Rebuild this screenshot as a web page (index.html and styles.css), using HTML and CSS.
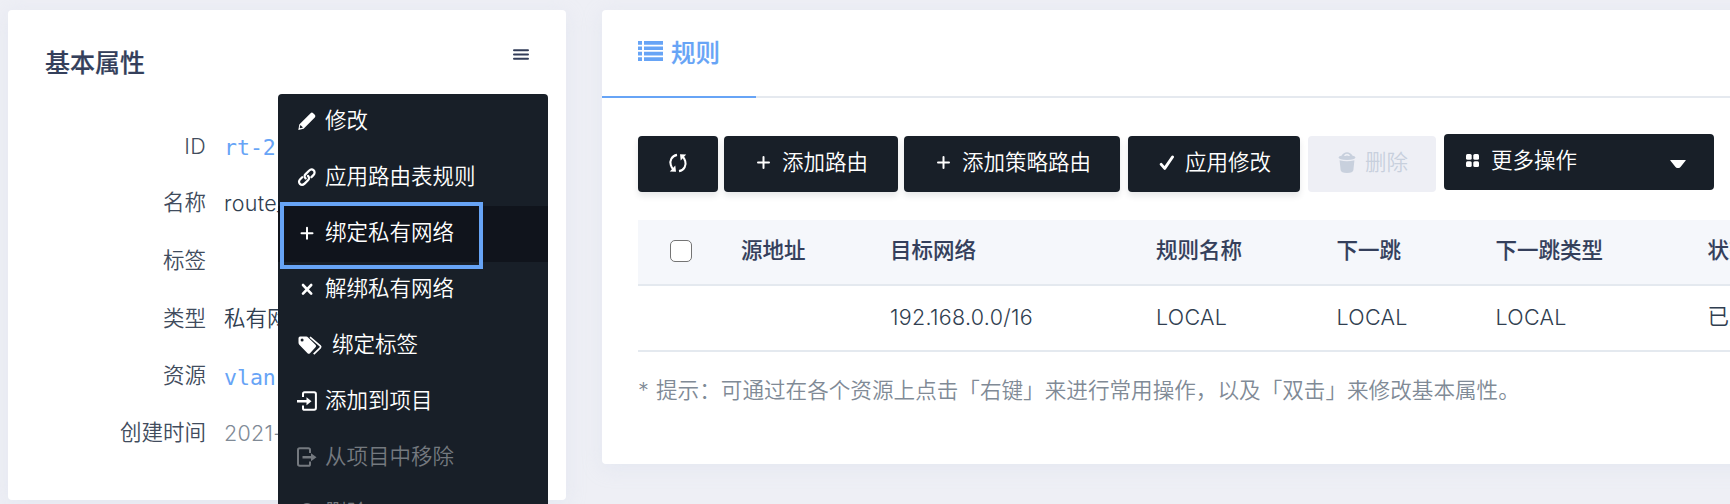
FILE: index.html
```html
<!DOCTYPE html>
<html lang="zh-CN">
<head>
<meta charset="utf-8">
<title>路由表</title>
<link rel="stylesheet" href="styles.css">
</head>
<body>
<main class="page">
  <section class="card props">
    <header class="props-head">
      <h2 class="props-title">基本属性</h2>
      <svg class="burger" width="16" height="12" viewBox="0 0 16 12"><path d="M1 1.2h14M1 5.4h14M1 9.8h14" stroke="#323c58" stroke-width="2" stroke-linecap="round"/></svg>
    </header>
    <dl class="attrs">
      <div class="attr"><dt class="latin">ID</dt><dd class="mono">rt-2</dd></div>
      <div class="attr name"><dt>名称</dt><dd class="latin">route_</dd></div>
      <div class="attr"><dt>标签</dt><dd></dd></div>
      <div class="attr"><dt>类型</dt><dd>私有网络</dd></div>
      <div class="attr"><dt>资源</dt><dd class="mono">vlan</dd></div>
      <div class="attr last"><dt>创建时间</dt><dd class="latin muted">2021-</dd></div>
    </dl>
    <ul class="menu">
      <li class="item"><svg class="icon" viewBox="0 0 20 20"><path d="M1.3 19l1-5.600L13.600 2.200q1.300-1.300 2.600 0l1.600 1.600q1.300 1.300 0 2.600L6.600 17.800z" fill="#fff"/><path d="M3.400 14l2.600 2.600-2.600.7-.7-.7z" fill="#181f28"/></svg><span>修改</span></li>
      <li class="item"><svg class="icon" viewBox="0 0 20 20" fill="none" stroke="#fff" stroke-width="2.200" stroke-linecap="round"><path d="M8.600 11.400c-1.500-1.500-1.300-3 0-4.300l3.400-3.400c1.500-1.500 3.500-1.500 4.700-.3s1.200 3.200-.3 4.700l-2 2"/><path d="M11 8.900c1.500 1.500 1.300 3 0 4.300l-3.400 3.400c-1.500 1.500-3.500 1.500-4.700.3s-1.200-3.200.3-4.700l2-2"/></svg><span>应用路由表规则</span></li>
      <li class="item active"><svg class="icon" viewBox="0 0 20 20"><path d="M10 4.700v11M4.500 10.200h11" stroke="#fff" stroke-width="2" stroke-linecap="round"/></svg><span>绑定私有网络</span></li>
      <li class="item"><svg class="icon" viewBox="0 0 20 20"><path d="M6 6l8.200 8.600M14.200 6L6 14.600" stroke="#fff" stroke-width="2.600" stroke-linecap="round"/></svg><span>解绑私有网络</span></li>
      <li class="item"><svg class="icon tags" viewBox="0 0 27 20"><path fill-rule="evenodd" fill="#fff" d="M1.500 3.200q0-1.600 1.600-1.600h6.200q1 0 1.800.8l7.400 7.300q1.300 1.300 0 2.600l-5.500 5.900q-1.200 1.200-2.500 0L2.300 9.800Q1.500 9 1.500 7.600zM5.100 3.600a1.500 1.500 0 1 0 0 3 1.500 1.500 0 0 0 0-3z"/><path d="M13 2.200l10.200 8.600q1 1 0 2l-6.500 6.300" fill="none" stroke="#fff" stroke-width="1.700"/></svg><span>绑定标签</span></li>
      <li class="item"><svg class="icon" viewBox="0 0 20 20"><path d="M6 6V2.800Q6 1.200 7.600 1.200h9.600q1.700 0 1.700 1.700v14.200q0 1.700-1.700 1.700H7.600Q6 18.800 6 17.200V14.500" fill="none" stroke="#fff" stroke-width="2"/><path d="M0 9h9.500V6.300l5 4-5 4v-2.700H0z" fill="#fff"/></svg><span>添加到项目</span></li>
      <li class="item off"><svg class="icon" viewBox="0 0 20 20"><path d="M13 6V2.800Q13 1.200 11.400 1.200H2.700Q1 1.200 1 2.900v14.200q0 1.700 1.700 1.700h8.700q1.600 0 1.600-1.600V14.500" fill="none" stroke="#74797f" stroke-width="2"/><path d="M5.500 9H14V6.300l5.500 4-5.500 4v-2.700H5.500z" fill="#74797f"/></svg><span>从项目中移除</span></li>
      <li class="item off"><svg class="icon" viewBox="0 0 20 20"><path d="M1.500 4.500Q5 3.500 6 1.200 10-1 14 1.200q1 2.300 4.500 3.300L17 7H3zM3 8.500h14L15.500 20h-11z" fill="#74797f"/></svg><span>删除</span></li>
    </ul>
    <div class="focus-box"></div>
  </section>

  <section class="card rules">
    <nav class="tabs">
      <div class="tab"><svg width="26" height="20" viewBox="0 0 26 20" fill="#67a4f6"><path d="M0 0h4v3.700H0zM0 5.400h4v3.700H0zM0 10.800h4v3.700H0zM0 16.200h4V20H0zM6 0h19v3.700H6zM6 5.400h19v3.700H6zM6 10.800h19v3.700H6zM6 16.200h19V20H6z"/></svg><span>规则</span></div>
    </nav>
    <div class="toolbar">
      <button class="btn refresh"><svg width="20" height="20" viewBox="0 0 20 20"><path d="M9 1.900C3.500 3 1.500 8 2.800 12q.8 2.600 2.400 4.300M11 18.100C16.500 17 18.500 12 17.200 8q-.8-2.600-2.400-4.300" fill="none" stroke="#fff" stroke-width="2.100"/><path d="M1.800 18.500l6.200.3-.7-6.300zM18.200 1.500l-6.200-.3.700 6.300z" fill="#fff"/></svg></button>
      <button class="btn add"><svg width="13" height="13" viewBox="0 0 13 13"><path d="M6.500 1v11M1 6.500h11" stroke="#fff" stroke-width="2" stroke-linecap="round"/></svg><span>添加路由</span></button>
      <button class="btn policy"><svg width="13" height="13" viewBox="0 0 13 13"><path d="M6.500 1v11M1 6.500h11" stroke="#fff" stroke-width="2" stroke-linecap="round"/></svg><span>添加策略路由</span></button>
      <button class="btn apply"><svg width="16" height="16" viewBox="0 0 16 16"><path d="M2.200 9.400l3.500 4L13.500 2" fill="none" stroke="#fff" stroke-width="2.900" stroke-linecap="round" stroke-linejoin="round"/></svg><span>应用修改</span></button>
      <button class="btn remove"><svg width="18" height="21" viewBox="0 0 18 21" fill="#c8d0dd"><path fill-rule="evenodd" d="M.5 5.600Q1 4 3.400 3.800 5.500.3 9 .3t5.600 3.500q2.400.2 2.900 1.800Q17 8 9 8T.5 5.600zM6 3.500q1 1 3 .1 2 .9 3-.1Q11 1.800 9 1.800T6 3.500z"/><path d="M1.600 8.200q7.400 2 14.800 0l-1 9.800q-.3 3-6.400 3t-6.400-3z"/></svg><span>删除</span></button>
      <button class="btn more"><svg width="13" height="13" viewBox="0 0 13 13" fill="#fff"><rect width="5.700" height="5.700" rx="1.500"/><rect x="7.300" width="5.700" height="5.700" rx="1.500"/><rect y="7.300" width="5.700" height="5.700" rx="1.500"/><rect x="7.300" y="7.300" width="5.700" height="5.700" rx="1.500"/></svg><span>更多操作</span><svg class="caret" width="16" height="8" viewBox="0 0 16 8"><path d="M.5 0h15q.5 0 .2.500L10.500 7q-.8 1-1.700 1H7.200q-.9 0-1.700-1L.3.500Q0 0 .5 0z" fill="#fff"/></svg></button>
    </div>
    <div class="table">
      <div class="row head"><div class="check"><span class="box"></span></div><div>源地址</div><div>目标网络</div><div>规则名称</div><div>下一跳</div><div>下一跳类型</div><div>状态</div></div>
      <div class="row"><div></div><div></div><div class="latin">192.168.0.0/16</div><div class="latin">LOCAL</div><div class="latin">LOCAL</div><div class="latin">LOCAL</div><div>已生效</div></div>
    </div>
    <p class="hint"><span class="star">*</span>提示：可通过在各个资源上点击「右键」来进行常用操作，以及「双击」来修改基本属性。</p>
  </section>
</main>
</body>
</html>
```
FILE: styles.css
```css
* { box-sizing: border-box; }
body {
  margin: 0;
  background: #eeeff5;
  color: #303e50;
  font: 350 21.5px/32px "Liberation Sans", "Noto Sans CJK SC", sans-serif;
}
.page {
  height: 504px;
  padding: 10px 0 0 8px;
  display: flex;
  align-items: flex-start;
  gap: 36px;
  overflow: hidden;
}
.card {
  background: #fff;
  border-radius: 4px;
  box-shadow: 0 4px 20px rgba(200, 213, 232, .25);
}
.latin {
  font-family: Inter, "Noto Sans CJK SC", sans-serif;
  font-size: 21.5px;
  font-weight: 350;
  letter-spacing: .3px;
}
.props {
  position: relative;
  flex: none;
  width: 558px;
  height: 490px;
}
.props-head {
  display: flex;
  justify-content: space-between;
  align-items: flex-start;
  height: 108px;
  padding: 35px 37px 0 37px;
}
.props-title {
  margin: 0;
  color: #343f5b;
  font-size: 25px;
  font-weight: 500;
  line-height: 36px;
  -webkit-text-stroke: .2px currentColor;
}
.burger { margin-top: 4px; }
.attrs { margin: 0; }
.attr {
  display: flex;
  gap: 18px;
  height: 57.6px;
  padding-top: 12px;
}
.attr.name { padding-top: 11px; }
.attr.last { padding-top: 11px; }
.attr dt { width: 198px; text-align: right; color: #414c5d; }
.attr dd { margin: 0; white-space: nowrap; }
.attr .mono { padding-top: 2px; color: #67a4f6; font-family: "DejaVu Sans Mono", monospace; }
.attr .muted { color: #808a96; }
.menu {
  position: absolute;
  left: 270px;
  top: 84px;
  width: 270px;
  height: 460px;
  margin: 0;
  padding: 0;
  list-style: none;
  background: #181f28;
  border-radius: 4px;
  color: #fff;
}
.item {
  display: flex;
  align-items: center;
  gap: 8px;
  height: 56px;
  padding: 0 0 3px 19px;
}
.item.active { background: #10141c; }
.item.off { color: #74797f; }
.icon { width: 20px; height: 20px; flex: none; }
.icon.tags { width: 27px; }
.focus-box {
  position: absolute;
  left: 272px;
  top: 192px;
  width: 203px;
  height: 67px;
  border: 4px solid #67a4f6;
}
.rules { flex: none; width: 1160px; height: 454px; }
.tabs { display: flex; height: 88px; box-shadow: inset 0 -2px #e5e9ef; }
.tab {
  display: flex;
  gap: 7px;
  width: 154px;
  padding: 26px 0 0 36px;
  border-bottom: 2px solid #67a4f6;
  color: #67a4f6;
  font-size: 24.5px;
  font-weight: 500;
  line-height: 36px;
  -webkit-text-stroke: .2px currentColor;
}
.tab svg { margin-top: 5px; }
.toolbar { display: flex; padding: 38px 0 0 36px; height: 122px; }
.btn {
  display: flex;
  align-items: center;
  flex: none;
  height: 56px;
  margin: 0 8px 0 0;
  padding: 0 0 3px;
  border: 0;
  border-radius: 4px;
  background: #181f28;
  color: #fff;
  box-shadow: 0 4px 6px rgba(24, 31, 40, .1);
  font: inherit;
}
.refresh { width: 80px; margin-right: 6px; padding-left: 30px; padding-bottom: 2px; }
.add { width: 174px; margin-right: 6px; padding-left: 33px; gap: 12px; }
.policy { width: 216px; padding-left: 33px; gap: 12px; }
.apply { width: 172px; padding-left: 31px; gap: 10px; }
.remove { width: 128px; padding-left: 30px; gap: 9px; background: #eeeff5; color: #c8d0dd; box-shadow: none; }
.more { width: 270px; margin-top: -2px; padding-left: 22px; gap: 12px; box-shadow: none; }
.caret { margin: 7px 28px 0 auto; }
.table { margin-left: 36px; }
.row {
  display: grid;
  grid-template-columns: 103px 149px 266px 180.5px 159px 212px 90px;
  align-items: center;
  height: 66px;
  padding-bottom: 3px;
  border-bottom: 2px solid #e4e9ef;
}
.row.head { background: #f5f7fb; color: #343f5b; font-weight: 500; -webkit-text-stroke: .1px currentColor; }
.check { padding-left: 32px; display: flex; }
.box { width: 22px; height: 22px; margin-top: 1px; border: 1.5px solid #747474; border-radius: 5px; background: #fff; }
.hint { margin: 22px 0 0 36px; color: #808a96; font-size: 21.6px; white-space: nowrap; }
.star { display: inline-block; width: 18px; font-family: Inter, sans-serif; font-weight: 300; }
```
